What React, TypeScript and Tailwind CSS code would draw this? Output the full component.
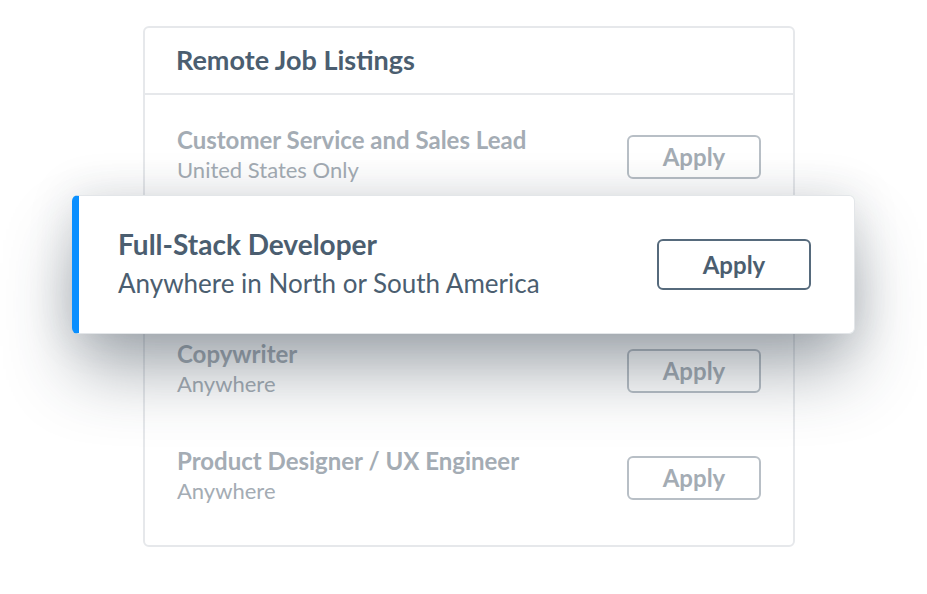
const jobs = [
  { title: 'Customer Service and Sales Lead', place: 'United States Only', hidden: false },
  { title: 'Full-Stack Developer', place: 'Anywhere in North or South America', hidden: true },
  { title: 'Copywriter', place: 'Anywhere', hidden: false },
  { title: 'Product Designer / UX Engineer', place: 'Anywhere', hidden: false },
]

function JobRow({ title, place, hidden }: { title: string; place: string; hidden: boolean }) {
  return (
    <div className={`flex h-[107px] items-center justify-between px-[32px] ${hidden ? 'invisible' : ''}`}>
      <div className="flex flex-col">
        <span className="text-[24px] font-bold leading-[30px] text-[#a4acb4]">{title}</span>
        <span className="text-[22px] leading-[30px] text-[#a4acb4]">{place}</span>
      </div>
      <button
        type="button"
        className="mt-[4px] h-[44px] w-[134px] rounded-[6px] border-2 border-[#b8bfc6] bg-transparent text-[24px] font-bold text-[#a4acb4]"
      >
        Apply
      </button>
    </div>
  )
}

export default function App() {
  return (
    <div
      className="relative h-[594px] w-[927px] overflow-hidden bg-white"
      style={{ fontFamily: 'Lato, "Open Sans", sans-serif' }}
    >
      <div className="ml-[143px] mt-[26px] h-[521px] w-[652px] rounded-[6px] border-2 border-[#e6e8eb] bg-white">
        <div className="flex h-[67px] items-center border-b-2 border-[#e6e8eb] px-[31px]">
          <h2 className="text-[27px] font-bold text-[#4b5e70]">Remote Job Listings</h2>
        </div>
        <div className="pt-[6px]">
          {jobs.map((job) => (
            <JobRow key={job.title} title={job.title} place={job.place} hidden={job.hidden} />
          ))}
        </div>
      </div>

      {/* highlighted listing lifted above the list */}
      <div className="absolute left-[72px] top-[195px] flex h-[139px] w-[783px] items-center justify-between rounded-[6px] border border-[#e3e6e9] border-l-[7px] border-l-[#0a8fff] bg-white pl-[39px] pr-[43px] shadow-[0_40px_70px_-5px_rgba(40,55,70,0.42),0_0_45px_rgba(40,55,70,0.15)]">
        <div className="flex flex-col pt-[2px]">
          <span className="text-[28px] font-bold leading-[34px] text-[#4b5e70]">Full-Stack Developer</span>
          <span className="text-[26px] leading-[44px] text-[#4b5e70]">Anywhere in North or South America</span>
        </div>
        <button
          type="button"
          className="h-[51px] w-[154px] rounded-[6px] border-2 border-[#566a7c] bg-white text-[24px] font-bold text-[#4b5e70]"
        >
          Apply
        </button>
      </div>
    </div>
  )
}
